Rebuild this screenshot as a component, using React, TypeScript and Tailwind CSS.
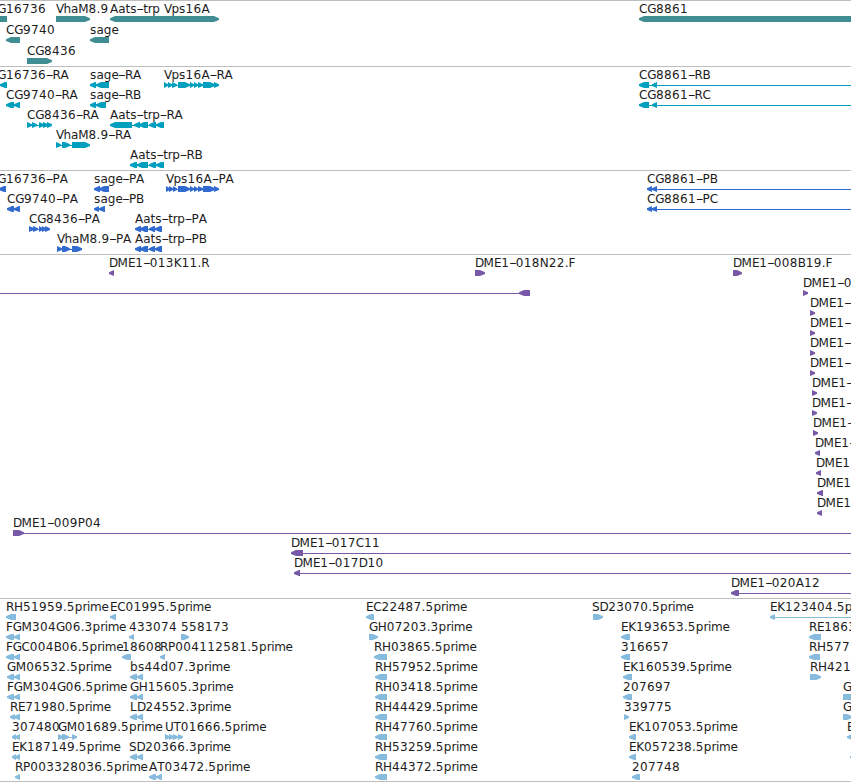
import React from 'react';

type Segment = [number, number];

interface Feature {
  x: number;
  label?: string;
  dir: 'left' | 'right';
  segments: Segment[];
  line?: Segment;
}

interface TrackData {
  name: string;
  color: string;
  rowHeight: number;
  height: number;
  rows: Feature[][];
}

const END = 870;

// horizontal advance of each character, in pixels
const ADVANCES: Record<string, number> = {
  '-': 6.5, '.': 3.8, A: 8.3, B: 8, C: 8.3, D: 8.6, E: 7.3, F: 6.7, G: 8.8, H: 9, K: 7.7, L: 7, M: 10.4,
  N: 9, P: 7.2, R: 8, S: 7.6, T: 7.2, U: 8.6, V: 7.4, a: 7.3, b: 8, d: 8, e: 7, g: 7.6, h: 7.5,
  i: 3, m: 11.4, p: 7.7, r: 4.5, s: 6.5, t: 4.6,
};

const left = (x: number, label: string, segments: Segment[], line?: Segment): Feature => ({ x, label, dir: 'left', segments, line });
const right = (x: number, label: string, segments: Segment[], line?: Segment): Feature => ({ x, label, dir: 'right', segments, line });

const vpsExons: Segment[] = [[178, 190], [190, 194], [194, 198], [198, 203], [203, 215], [214, 219]];
const aatsCoding: Segment[] = [[135, 141], [140, 148], [149, 155], [155, 162]];
const pairA: Segment[] = [[6, 14], [14, 20]];
const pairB: Segment[] = [[130, 137], [137, 143]];

const tracks: TrackData[] = [
  {
    name: 'genes',
    color: '#408e93',
    rowHeight: 21,
    height: 66,
    rows: [
      [
        left(-11, 'CG16736', [[-10, 7]]),
        right(56, 'VhaM8.9', [[56, 90]]),
        left(110, 'Aats-trp', [[110, 165]]),
        right(164, 'Vps16A', [[164, 219]]),
        left(639, 'CG8861', [[639, END]]),
      ],
      [left(6, 'CG9740', [[6, 20]]), left(90, 'sage', [[90, 109]])],
      [right(27, 'CG8436', [[27, 52]])],
    ],
  },
  {
    name: 'transcripts',
    color: '#009fbe',
    rowHeight: 20,
    height: 104,
    rows: [
      [
        left(-11, 'CG16736-RA', [[0, 7]]),
        left(90, 'sage-RA', [[90, 96], [96, 109]]),
        right(164, 'Vps16A-RA', [[164, 168], [168, 172], [172, 177], ...vpsExons]),
        left(639, 'CG8861-RB', [[639, 649], [652, 657]], [639, END]),
      ],
      [
        left(6, 'CG9740-RA', pairA),
        left(90, 'sage-RB', [[90, 96], [96, 106]]),
        left(639, 'CG8861-RC', [[639, 649], [652, 657]], [639, END]),
      ],
      [
        right(27, 'CG8436-RA', [[27, 32], [32, 37], [39, 44], [43, 48], [47, 52]]),
        left(110, 'Aats-trp-RA', [[110, 132], [134, 140], [139, 148], [149, 156], [156, 164]]),
      ],
      [right(56, 'VhaM8.9-RA', [[56, 61], [62, 70], [72, 90]])],
      [left(130, 'Aats-trp-RB', [[130, 137], [137, 148], [149, 156], [156, 164]])],
    ],
  },
  {
    name: 'proteins',
    color: '#326bcf',
    rowHeight: 20,
    height: 84,
    rows: [
      [
        left(-11, 'CG16736-PA', [[-1, 6]]),
        left(94, 'sage-PA', [[94, 100], [99, 109]]),
        right(166, 'Vps16A-PA', [[166, 170], [169, 173], [173, 177], ...vpsExons]),
        left(647, 'CG8861-PB', [[647, 652], [652, 657]], [647, END]),
      ],
      [
        left(7, 'CG9740-PA', [[7, 14], [14, 20]]),
        left(94, 'sage-PB', [[94, 99], [99, 105]]),
        left(647, 'CG8861-PC', [[647, 652], [652, 657]], [647, END]),
      ],
      [
        right(29, 'CG8436-PA', [[29, 34], [33, 38], [39, 43], [42, 46], [45, 50]]),
        left(135, 'Aats-trp-PA', aatsCoding),
      ],
      [right(57, 'VhaM8.9-PA', [[57, 62], [62, 70], [72, 82]]), left(135, 'Aats-trp-PB', aatsCoding)],
    ],
  },
  {
    name: 'clones',
    color: '#7759a8',
    rowHeight: 20,
    height: 344,
    rows: [
      [
        left(109, 'DME1-013K11.R', [[109, 114]]),
        right(475, 'DME1-018N22.F', [[475, 485]]),
        right(733, 'DME1-008B19.F', [[733, 742]]),
      ],
      [left(-100, '', [[519, 530]], [-1, 530]), right(803, 'DME1-0', [[803, 808]])],
      [right(810, 'DME1-', [[810, 815]])],
      [right(810, 'DME1-', [[810, 815]])],
      [right(810, 'DME1-', [[810, 815]])],
      [right(810, 'DME1-', [[810, 815]])],
      [right(812, 'DME1-', [[812, 817]])],
      [right(812, 'DME1-', [[812, 817]])],
      [right(813, 'DME1-', [[813, 818]])],
      [left(815, 'DME1-', [[815, 820]])],
      [left(816, 'DME1', [[816, 821]])],
      [left(817, 'DME1', [[817, 823]])],
      [left(817, 'DME1', [[817, 822]])],
      [right(13, 'DME1-009P04', [[13, 24]], [13, END])],
      [left(291, 'DME1-017C11', [[291, 303]], [291, END])],
      [left(294, 'DME1-017D10', [[294, 300]], [294, END])],
      [left(731, 'DME1-020A12', [[731, 739]], [731, END])],
    ],
  },
  {
    name: 'ests',
    color: '#87bbdd',
    rowHeight: 20,
    height: 183,
    rows: [
      [
        left(6, 'RH51959.5prime', [[6, 16]]),
        left(110, 'EC01995.5prime', [[110, 116]]),
        left(366, 'EC22487.5prime', [[366, 374]]),
        right(592, 'SD23070.5prime', [[593, 603]]),
        left(770, 'EK123404.5p', [[770, 775]], [770, END]),
      ],
      [
        left(6, 'FGM304G06.3prime', pairA),
        left(129, '433074', [[129, 134]]),
        right(181, '558173', [[181, 189]]),
        right(369, 'GH07203.3prime', [[369, 378]]),
        left(621, 'EK193653.5prime', [[621, 630]]),
        left(809, 'RE1863', [[809, 821]]),
      ],
      [
        left(6, 'FGC004B06.5prime', pairA),
        left(122, '18608', [[122, 131]]),
        left(160, 'RP004112581.5prime', [[160, 165]]),
        left(374, 'RH03865.5prime', [[374, 387]]),
        left(621, '316657', [[621, 630]]),
        left(809, 'RH577', [[809, 820]]),
      ],
      [
        left(7, 'GM06532.5prime', [[7, 14], [14, 20]]),
        left(130, 'bs44d07.3prime', pairB),
        left(375, 'RH57952.5prime', [[375, 387]]),
        left(623, 'EK160539.5prime', [[623, 632]]),
        right(810, 'RH421', [[810, 821]]),
      ],
      [
        left(7, 'FGM304G06.5prime', [[7, 14], [14, 20]]),
        left(130, 'GH15605.3prime', pairB),
        left(375, 'RH03418.5prime', [[375, 387]]),
        left(623, '207697', [[623, 632]]),
        right(843, 'G', [[843, 862]]),
      ],
      [
        left(10, 'RE71980.5prime', [[10, 15], [14, 20]]),
        left(130, 'LD24552.3prime', pairB),
        left(375, 'RH44429.5prime', [[375, 387]]),
        right(624, '339775', [[624, 629]]),
        right(843, 'G', [[843, 852]]),
      ],
      [
        left(12, '307480', [[12, 16], [15, 20]]),
        right(58, 'GM01689.5prime', [[58, 63], [62, 69], [72, 77]], [58, 77]),
        right(165, 'UT01666.5prime', [[165, 170], [169, 174], [173, 178], [178, 183]]),
        left(375, 'RH47760.5prime', [[375, 387]]),
        left(629, 'EK107053.5prime', [[629, 636]]),
        left(847, 'E', [[847, 860]]),
      ],
      [
        left(12, 'EK187149.5prime', [[12, 16], [15, 20]]),
        left(129, 'SD20366.3prime', pairB),
        left(375, 'RH53259.5prime', [[375, 387]]),
        left(629, 'EK057238.5prime', [[629, 636]]),
        left(850, '', [[850, 860]]),
      ],
      [
        left(15, 'RP003328036.5prime', [[15, 20]]),
        left(149, 'AT03472.5prime', [[149, 156], [156, 162]]),
        left(375, 'RH44372.5prime', [[375, 387]]),
        left(632, '207748', [[632, 640]]),
      ],
    ],
  },
];

// the tip is two pixels high, so that short exons stay readable
function arrowPoints([x0, x1]: Segment, y: number, dir: 'left' | 'right') {
  const head = Math.min(5, x1 - x0);
  if (dir === 'left') {
    return `${x0},${y + 2.3} ${x0 + head},${y} ${x1},${y} ${x1},${y + 6} ${x0 + head},${y + 6} ${x0},${y + 4}`;
  }
  return `${x0},${y} ${x1 - head},${y} ${x1},${y + 2.3} ${x1},${y + 4} ${x1 - head},${y + 6} ${x0},${y + 6}`;
}

function Label({ x, y, text }: { x: number; y: number; text: string }) {
  let pos = x;
  const starts = [...text].map((ch) => {
    const start = pos;
    pos += ADVANCES[ch] ?? 8;
    return start;
  });
  const parts = text.split(/(-)/).filter(Boolean);
  let index = 0;
  return (
    <text y={y} className="fill-[#1c1c1c]">
      {parts.map((part, i) => {
        const from = index;
        index += part.length;
        if (part === '-') {
          return (
            <tspan key={i} x={starts[from] - 0.4} textLength={8} lengthAdjust="spacingAndGlyphs">-</tspan>
          );
        }
        return <tspan key={i} x={starts.slice(from, index).join(' ')}>{part}</tspan>;
      })}
    </text>
  );
}

function FeatureGlyph({ feature, top }: { feature: Feature; top: number }) {
  const { segments, dir, label, x } = feature;
  const [start, end] = feature.line ?? [segments[0][0], segments[segments.length - 1][1]];
  return (
    <g>
      <rect x={start + 1} y={top + 19} width={end - start - 2} height={1} />
      {segments.map((segment, i) => (
        <polygon key={i} points={arrowPoints(segment, top + 16, dir)} />
      ))}
      {label && <Label x={x} y={top + 13} text={label} />}
    </g>
  );
}

function Track({ track }: { track: TrackData }) {
  return (
    <section className="border-t border-[#bebebe] overflow-hidden" style={{ height: track.height }}>
      <svg
        width={851}
        height={track.height - 1}
        viewBox={`0 1 851 ${track.height - 1}`}
        fill={track.color}
        className="block text-[12px] font-['DejaVu_Sans',sans-serif]"
      >
        {track.rows.map((row, r) => (
          <g key={r}>
            {row.map((feature, i) => (
              <FeatureGlyph key={i} feature={feature} top={r * track.rowHeight} />
            ))}
          </g>
        ))}
      </svg>
    </section>
  );
}

export default function App() {
  return (
    <main className="flex flex-col w-[851px] h-[782px] bg-white border-b border-[#bebebe] overflow-hidden">
      {tracks.map((track) => (
        <Track key={track.name} track={track} />
      ))}
    </main>
  );
}
